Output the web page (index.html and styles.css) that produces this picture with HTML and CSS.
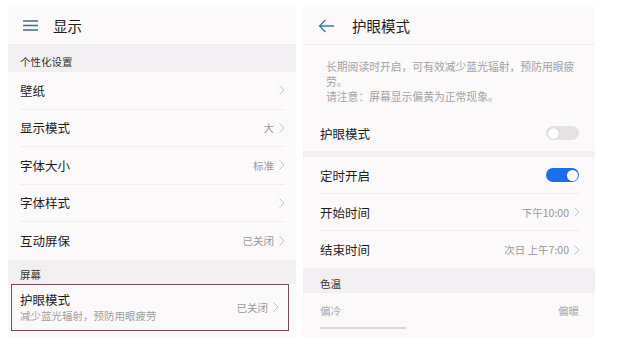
FILE: index.html
```html
<!DOCTYPE html>
<html lang="zh">
<head>
<meta charset="utf-8">
<link rel="stylesheet" href="styles.css">
</head>
<body>
<div class="page">
  <section class="panel left">
    <header class="head">
      <svg class="menu" width="15" height="11" viewBox="0 0 15 11"><path d="M0 1h15M0 5.5h15M0 10h15" stroke="#3d6f80" stroke-width="1.3" fill="none"/></svg>
      <span class="title">显示</span>
    </header>
    <div class="band">个性化设置</div>
    <div class="row sep"><span class="label">壁纸</span><span class="val"><svg class="chev" width="6" height="10" viewBox="0 0 6 10"><path d="M0.5 0.5l4.5 4.5l-4.5 4.5" stroke="#c4c2c4" stroke-width="1" fill="none"/></svg></span></div>
    <div class="row sep"><span class="label">显示模式</span><span class="val">大<svg class="chev" width="6" height="10" viewBox="0 0 6 10"><path d="M0.5 0.5l4.5 4.5l-4.5 4.5" stroke="#c4c2c4" stroke-width="1" fill="none"/></svg></span></div>
    <div class="row sep"><span class="label">字体大小</span><span class="val">标准<svg class="chev" width="6" height="10" viewBox="0 0 6 10"><path d="M0.5 0.5l4.5 4.5l-4.5 4.5" stroke="#c4c2c4" stroke-width="1" fill="none"/></svg></span></div>
    <div class="row sep"><span class="label">字体样式</span><span class="val"><svg class="chev" width="6" height="10" viewBox="0 0 6 10"><path d="M0.5 0.5l4.5 4.5l-4.5 4.5" stroke="#c4c2c4" stroke-width="1" fill="none"/></svg></span></div>
    <div class="row"><span class="label">互动屏保</span><span class="val">已关闭<svg class="chev" width="6" height="10" viewBox="0 0 6 10"><path d="M0.5 0.5l4.5 4.5l-4.5 4.5" stroke="#c4c2c4" stroke-width="1" fill="none"/></svg></span></div>
    <div class="band band2">屏幕</div>
    <div class="boxed">
      <div class="stack">
        <span class="label">护眼模式</span>
        <span class="sub">减少蓝光辐射，预防用眼疲劳</span>
      </div>
      <span class="val">已关闭<svg class="chev" width="6" height="10" viewBox="0 0 6 10"><path d="M0.5 0.5l4.5 4.5l-4.5 4.5" stroke="#c4c2c4" stroke-width="1" fill="none"/></svg></span>
    </div>
  </section>

  <section class="panel right">
    <header class="head">
      <svg class="back" width="17" height="14" viewBox="0 0 17 14"><path d="M16 7H1.5M7.5 1L1.5 7l6 6" stroke="#3d7f92" stroke-width="1.3" fill="none"/></svg>
      <span class="title">护眼模式</span>
    </header>
    <div class="card">
      <p class="desc">长期阅读时开启，可有效减少蓝光辐射，预防用眼疲劳。<br>请注意：屏幕显示偏黄为正常现象。</p>
      <div class="row trow"><span class="label">护眼模式</span><span class="toggle off"><i></i></span></div>
    </div>
    <div class="gap"></div>
    <div class="row sep"><span class="label">定时开启</span><span class="toggle on"><i></i></span></div>
    <div class="row sep"><span class="label">开始时间</span><span class="val">下午10:00<svg class="chev" width="6" height="10" viewBox="0 0 6 10"><path d="M0.5 0.5l4.5 4.5l-4.5 4.5" stroke="#c4c2c4" stroke-width="1" fill="none"/></svg></span></div>
    <div class="row"><span class="label">结束时间</span><span class="val">次日 上午7:00<svg class="chev" width="6" height="10" viewBox="0 0 6 10"><path d="M0.5 0.5l4.5 4.5l-4.5 4.5" stroke="#c4c2c4" stroke-width="1" fill="none"/></svg></span></div>
    <div class="band band3">色温</div>
    <div class="temp"><span>偏冷</span><span>偏暖</span></div>
    <div class="slider"><i></i></div>
  </section>
</div>
</body>
</html>
```

FILE: styles.css
```css
* { box-sizing: border-box; }
html, body { margin: 0; padding: 0; background: #ffffff; }
body {
  font-family: "Noto Sans CJK SC", "Noto Sans", sans-serif;
  color: #222;
  height: 337px;
  overflow: hidden;
}
.page {
  display: flex;
  gap: 7px;
  padding: 7px 0 0 8px;
}
.panel {
  background: #fbf9fa;
  display: flex;
  flex-direction: column;
  height: 330px;
}
.panel > * { flex-shrink: 0; }
.left { width: 288px; }
.right { width: 292px; }

.head {
  height: 38px;
  display: flex;
  align-items: center;
  border-bottom: 1px solid #efedef;
}
.left .head { padding-left: 15px; }
.left .head .title { margin-left: 15px; }
.right .head { padding-left: 15px; }
.right .head .title { margin-left: 17px; }
.title { font-size: 14.5px; color: #1e1e1e; }

.band {
  background: #f1eff1;
  font-size: 10.5px;
  color: #333;
  height: 27px;
  display: flex;
  align-items: center;
  padding-left: 12px;
  padding-top: 6px;
}
.band2 { height: 24px; padding-top: 5px; }
.band3 { height: 25px; padding-left: 17px; padding-top: 5px; }

.row {
  height: 37.5px;
  display: flex;
  align-items: center;
  justify-content: space-between;
  margin: 0 11px 0 12px;
  position: relative;
}
.right .row { margin: 0 15px 0 17px; height: 37px; }
.right .trow { height: 36px; margin-top: 11px; }
.row.sep { border-bottom: 1px solid #efedef; }
.label { font-size: 12.5px; color: #1e1e1e; }
.val {
  font-size: 10.5px;
  color: #9a989a;
  display: flex;
  align-items: center;
}
.chev { margin-left: 5px; }

.boxed {
  margin: 0 7px 0 3px;
  height: 47px;
  border: 1.5px solid #7b4b52;
  display: flex;
  align-items: center;
  justify-content: space-between;
  padding: 0 9px 0 8px;
}
.stack { display: flex; flex-direction: column; }
.stack .label { line-height: 17px; }
.sub { font-size: 10.5px; color: #a09ea0; line-height: 16px; }

.card { padding-top: 14px; }
.desc {
  margin: 0 20px 0 23px;
  font-size: 10.8px;
  line-height: 15px;
  color: #a5a3a5;
}
.gap { height: 6px; background: #f1eff1; }

.toggle {
  width: 33px;
  height: 14px;
  border-radius: 7px;
  position: relative;
  margin-right: 1px;
}
.toggle i {
  position: absolute;
  top: 1.5px;
  width: 11px;
  height: 11px;
  border-radius: 50%;
  background: #fff;
}
.toggle.off { background: #e4e2e4; }
.toggle.off i { left: 1.5px; box-shadow: 0 0 1px rgba(0,0,0,0.25); }
.toggle.on { background: #1a6eec; }
.toggle.on i { right: 1.5px; }

.temp {
  display: flex;
  justify-content: space-between;
  font-size: 10.5px;
  color: #aaa8aa;
  margin: 0 16px 0 17px;
  height: 34px;
  align-items: center;
}
.slider { margin: 0 17px; height: 2px; }
.slider i { display: block; width: 86px; height: 2px; background: #d8d6d8; }
```
